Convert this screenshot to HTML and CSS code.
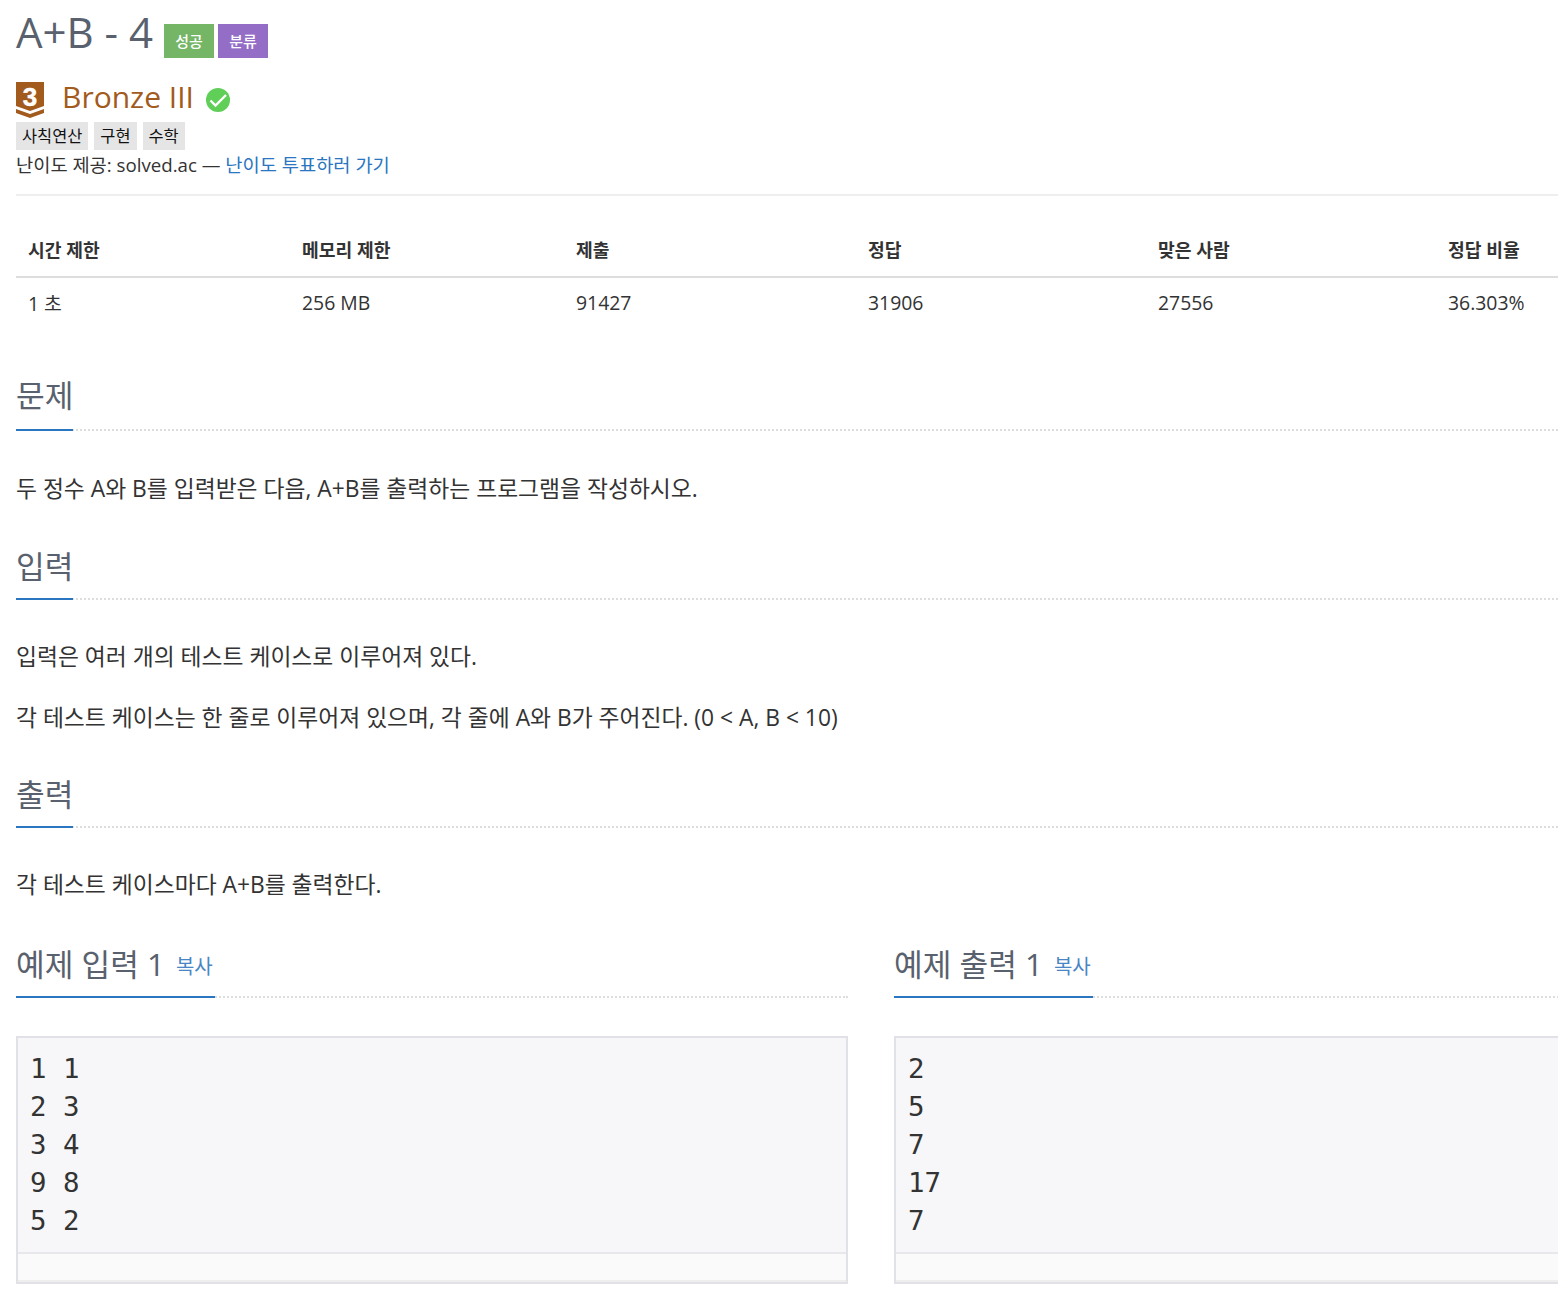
FILE: index.html
```html
<!DOCTYPE html>
<html lang="ko">
<head>
    <meta charset="UTF-8">
    <title>A+B - 4</title>
    <link rel="stylesheet" href="styles.css">
</head>
<body>
    <div class="page-header">
        <h1 class="title">A+B - 4 <span class="label label-green">성공</span><span class="label label-purple">분류</span></h1>
        <div class="tier">
            <svg class="tier-icon" viewBox="0 0 28 36" width="28" height="36">
                <path d="M0 0H28V24L14 29L0 24Z" fill="#a25a1d"/>
                <path d="M0 27L14 32L28 27V31L14 36L0 31Z" fill="#a25a1d"/>
                <text x="14" y="23.5" text-anchor="middle" class="tier-num">3</text>
            </svg>
            <span class="tier-name">Bronze III</span>
            <svg class="check" viewBox="0 0 24 24" width="24" height="24">
                <circle cx="12" cy="12" r="12" fill="#5fcf58"/>
                <path d="M4.5 12.5L9.5 17.5L20 7" fill="none" stroke="#fff" stroke-width="2.4"/>
            </svg>
        </div>
        <div class="tags">
            <span class="tag">사칙연산</span>
            <span class="tag">구현</span>
            <span class="tag">수학</span>
        </div>
        <div class="credit">난이도 제공: solved.ac — <a href="#">난이도 투표하러 가기</a></div>
    </div>

    <table class="info">
        <thead>
            <tr>
                <th>시간 제한</th>
                <th>메모리 제한</th>
                <th>제출</th>
                <th>정답</th>
                <th>맞은 사람</th>
                <th>정답 비율</th>
            </tr>
        </thead>
        <tbody>
            <tr>
                <td>1 초</td>
                <td>256 MB</td>
                <td>91427</td>
                <td>31906</td>
                <td>27556</td>
                <td>36.303%</td>
            </tr>
        </tbody>
    </table>

    <section class="section section-problem">
        <div class="headline"><h2>문제</h2></div>
        <p>두 정수 A와 B를 입력받은 다음, A+B를 출력하는 프로그램을 작성하시오.</p>
    </section>

    <section class="section section-input">
        <div class="headline"><h2>입력</h2></div>
        <p>입력은 여러 개의 테스트 케이스로 이루어져 있다.</p>
        <p class="next">각 테스트 케이스는 한 줄로 이루어져 있으며, 각 줄에 A와 B가 주어진다. (0 &lt; A, B &lt; 10)</p>
    </section>

    <section class="section section-output">
        <div class="headline"><h2>출력</h2></div>
        <p>각 테스트 케이스마다 A+B를 출력한다.</p>
    </section>

    <div class="samples">
        <section class="sample">
            <div class="headline"><h2>예제 입력 1 <a class="copy" href="#">복사</a></h2></div>
            <div class="sample-box">
                <pre>1 1
2 3
3 4
9 8
5 2</pre>
                <div class="sample-foot"></div>
            </div>
        </section>
        <section class="sample">
            <div class="headline"><h2>예제 출력 1 <a class="copy" href="#">복사</a></h2></div>
            <div class="sample-box">
                <pre>2
5
7
17
7</pre>
                <div class="sample-foot"></div>
            </div>
        </section>
    </div>
</body>
</html>
```

FILE: styles.css
```css
html, body {
    overflow: hidden;
}
body {
    font-family: "Open Sans", "Noto Sans CJK KR", sans-serif;
    margin: 0;
    padding: 0 0 0 16px;
    background-color: #fff;
    color: #333;
    font-size: 19.4px;
}
a {
    color: #2a76c0;
    text-decoration: none;
}
.page-header {
    height: 196px;
    box-sizing: border-box;
    border-bottom: 2px solid #eee;
}
.title {
    margin: 0;
    padding-top: 9px;
    height: 58px;
    box-sizing: border-box;
    font-size: 42px;
    line-height: 46px;
    font-weight: 400;
    color: #58616d;
    white-space: nowrap;
}
.label {
    display: inline-block;
    height: 34px;
    width: 50px;
    margin-left: 4px;
    font-size: 15px;
    line-height: 34px;
    font-weight: 500;
    text-align: center;
    color: #fff;
    vertical-align: 1px;
}
.label-green {
    background-color: #74b566;
    margin-left: 0;
}
.label-purple {
    background-color: #946ec6;
}
.tier {
    display: flex;
    align-items: center;
    height: 36px;
    margin-top: 24px;
}
.tier-num {
    font-family: "Liberation Sans", sans-serif;
    font-size: 26px;
    font-weight: 700;
    fill: #fff;
    stroke: #fff;
    stroke-width: 0.5px;
}
.tier-name {
    margin-left: 18px;
    margin-bottom: 6px;
    font-size: 30px;
    line-height: 36px;
    color: #a25a1d;
}
.check {
    margin-left: 12px;
}
.tags {
    display: flex;
    gap: 6px;
    margin-top: 4px;
}
.tag {
    height: 28px;
    padding: 0 6px;
    line-height: 28px;
    font-size: 16.4px;
    color: #111;
    background-color: #e5e5e5;
}
.credit {
    height: 30px;
    line-height: 30px;
    font-size: 18.7px;
}
.info {
    width: 1542px;
    margin-top: 36px;
    border-collapse: collapse;
    table-layout: fixed;
}
.info th:nth-child(1), .info th:nth-child(2) {
    width: 274px;
}
.info th:nth-child(3) {
    width: 292px;
}
.info th:nth-child(4), .info th:nth-child(5) {
    width: 290px;
}
.info th {
    box-sizing: border-box;
    height: 45px;
    padding: 0 12px 10px;
    text-align: left;
    font-size: 18.2px;
    font-weight: 700;
    border-bottom: 2px solid #ddd;
}
.info td {
    box-sizing: border-box;
    height: 51px;
    padding: 0 12px 2px;
    white-space: nowrap;
}
.headline {
    border-bottom: 2px dotted #ddd;
}
.headline h2 {
    display: inline-block;
    box-sizing: border-box;
    height: 56px;
    margin: 0 0 -2px;
    font-size: 31.2px;
    line-height: 44px;
    font-weight: 400;
    color: #58616d;
    border-bottom: 2px solid #2a76c0;
    white-space: nowrap;
    vertical-align: top;
}
.section p {
    margin: 26px 0 0;
    font-size: 22.8px;
    line-height: 61px;
}
.section p.next {
    margin-top: 0;
}
.section-problem {
    margin-top: 45px;
}
.section-problem h2 {
    height: 58px;
}
.section-problem p {
    margin-top: 27px;
}
.section-input {
    margin-top: 25px;
}
.section-output {
    margin-top: 24px;
}
.samples {
    display: flex;
    gap: 46px;
    margin-top: 27px;
}
.sample {
    flex: 0 0 832px;
}
.sample + .sample {
    flex: 0 0 680px;
}
.sample h2 {
    padding-right: 2px;
}
.copy {
    margin-left: 3px;
    font-size: 20px;
    color: #4a86c5;
    position: relative;
    top: -2px;
}
.sample-box {
    margin-top: 38px;
    height: 248px;
    box-sizing: border-box;
    border: 2px solid #e1e1e8;
    background-color: #f7f7f9;
}
.sample-box pre {
    margin: 0;
    height: 214px;
    box-sizing: border-box;
    padding: 12px 12px 0;
    font-family: "DejaVu Sans Mono", monospace;
    font-size: 27.4px;
    line-height: 38px;
    color: #333;
}
.sample-foot {
    height: 30px;
    box-sizing: border-box;
    border-top: 2px solid #e8e8ec;
    border-bottom: 2px solid #eeeeee;
    background-color: #fafafa;
}
```
